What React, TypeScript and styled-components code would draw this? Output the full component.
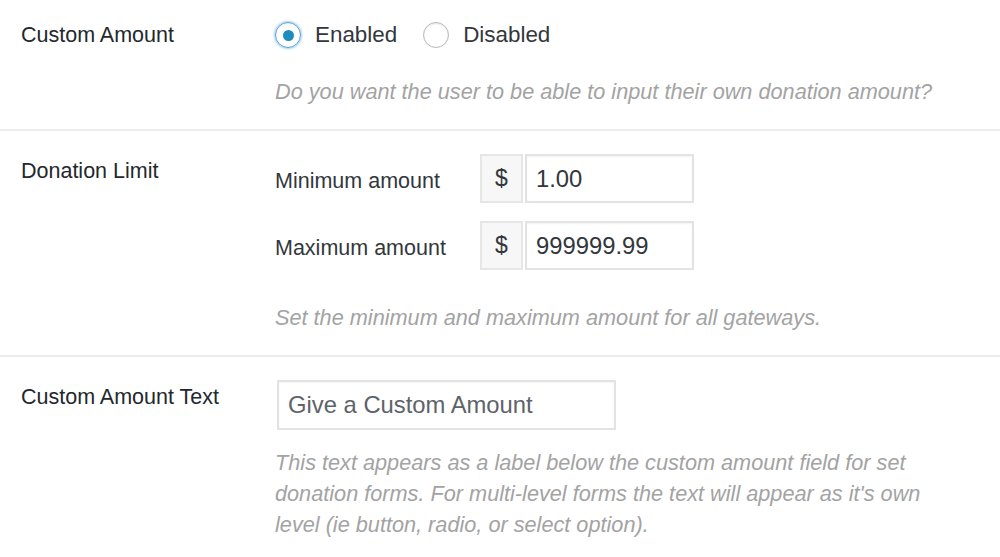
import styled, { createGlobalStyle } from "styled-components";

const GlobalStyle = createGlobalStyle`
  body {
    margin: 0;
    background: #ffffff;
    font-family: "Liberation Sans", Arial, sans-serif;
    color: #23282d;
  }
`;

const Form = styled.div`
  width: 1000px;
  overflow: hidden;
`;

const Row = styled.div<{ $top: number; $bottom: number; $last?: boolean }>`
  display: grid;
  grid-template-columns: 254px 1fr;
  padding: ${({ $top, $bottom }) => `${$top}px 0 ${$bottom}px 21px`};
  border-bottom: ${({ $last }) => ($last ? "none" : "2px solid #ededed")};
`;

const Label = styled.div`
  font-size: 21.5px;
  line-height: 30px;
  margin-top: 3px;
  color: #23282d;
`;

const Field = styled.div`
  display: flex;
  flex-direction: column;
`;

const RadioGroup = styled.div`
  display: flex;
  align-items: center;
  height: 30px;
  margin-top: 3px;
  gap: 26px;
`;

const RadioOption = styled.label`
  display: flex;
  align-items: center;
  gap: 14px;
  font-size: 22.4px;
  color: #32373c;
`;

const RadioCircle = styled.span<{ $checked?: boolean }>`
  width: 26px;
  height: 26px;
  box-sizing: border-box;
  border-radius: 50%;
  border: 1.5px solid ${({ $checked }) => ($checked ? "#5b9dd9" : "#b4b9be")};
  box-shadow: ${({ $checked }) =>
    $checked
      ? "0 0 3px rgba(30, 140, 190, 0.8), inset 0 1px 2px rgba(0,0,0,0.07)"
      : "inset 0 1px 2px rgba(0,0,0,0.1)"};
  display: flex;
  align-items: center;
  justify-content: center;

  &::after {
    content: "";
    display: ${({ $checked }) => ($checked ? "block" : "none")};
    width: 11px;
    height: 11px;
    border-radius: 50%;
    background: #1e8cbe;
  }
`;

const Description = styled.p<{ $gap: number }>`
  margin: ${({ $gap }) => `${$gap}px 0 0`};
  font-size: 21.7px;
  line-height: 31px;
  font-style: italic;
  color: #a3a3a3;
  max-width: 684px;
`;

const AmountGrid = styled.div`
  display: grid;
  grid-template-columns: 205px auto;
  row-gap: 17px;
  align-items: center;
  justify-content: start;
`;

const AmountLabel = styled.span`
  font-size: 21.5px;
  color: #32373c;
  padding-top: 7px;
`;

const InputGroup = styled.div`
  display: flex;
  gap: 2px;
  height: 49px;
  margin-top: 1px;
`;

const Addon = styled.span`
  width: 43px;
  box-sizing: border-box;
  border: 2px solid #e6e6e6;
  background: #f7f7f7;
  display: flex;
  align-items: center;
  justify-content: center;
  font-size: 23px;
  color: #32373c;
`;

const TextInput = styled.div<{ $width: number; $muted?: boolean }>`
  width: ${({ $width }) => `${$width}px`};
  box-sizing: border-box;
  border: 2px solid #e3e3e3;
  box-shadow: inset 0 1px 2px rgba(0, 0, 0, 0.05);
  display: flex;
  align-items: center;
  padding-left: 9px;
  font-size: 23.8px;
  color: ${({ $muted }) => ($muted ? "#5d6369" : "#32373c")};
  background: #ffffff;
`;

const TextBox = styled(TextInput)`
  height: 50px;
  margin-left: 2px;
  margin-top: 1px;
`;

export default function App() {
  return (
    <>
      <GlobalStyle />
      <Form>
        <Row $top={17} $bottom={22}>
          <Label>Custom Amount</Label>
          <Field>
            <RadioGroup>
              <RadioOption>
                <RadioCircle $checked />
                Enabled
              </RadioOption>
              <RadioOption>
                <RadioCircle />
                Disabled
              </RadioOption>
            </RadioGroup>
            <Description $gap={26}>
              Do you want the user to be able to input their own donation amount?
            </Description>
          </Field>
        </Row>
        <Row $top={22} $bottom={22}>
          <Label>Donation Limit</Label>
          <Field>
            <AmountGrid>
              <AmountLabel>Minimum amount</AmountLabel>
              <InputGroup>
                <Addon>$</Addon>
                <TextInput $width={169}>1.00</TextInput>
              </InputGroup>
              <AmountLabel>Maximum amount</AmountLabel>
              <InputGroup>
                <Addon>$</Addon>
                <TextInput $width={169}>999999.99</TextInput>
              </InputGroup>
            </AmountGrid>
            <Description $gap={32}>
              Set the minimum and maximum amount for all gateways.
            </Description>
          </Field>
        </Row>
        <Row $top={22} $bottom={20} $last>
          <Label>Custom Amount Text</Label>
          <Field>
            <TextBox $width={339} $muted>
              Give a Custom Amount
            </TextBox>
            <Description $gap={17}>
              This text appears as a label below the custom amount field for set
              donation forms. For multi-level forms the text will appear as it's own
              level (ie button, radio, or select option).
            </Description>
          </Field>
        </Row>
      </Form>
    </>
  );
}
